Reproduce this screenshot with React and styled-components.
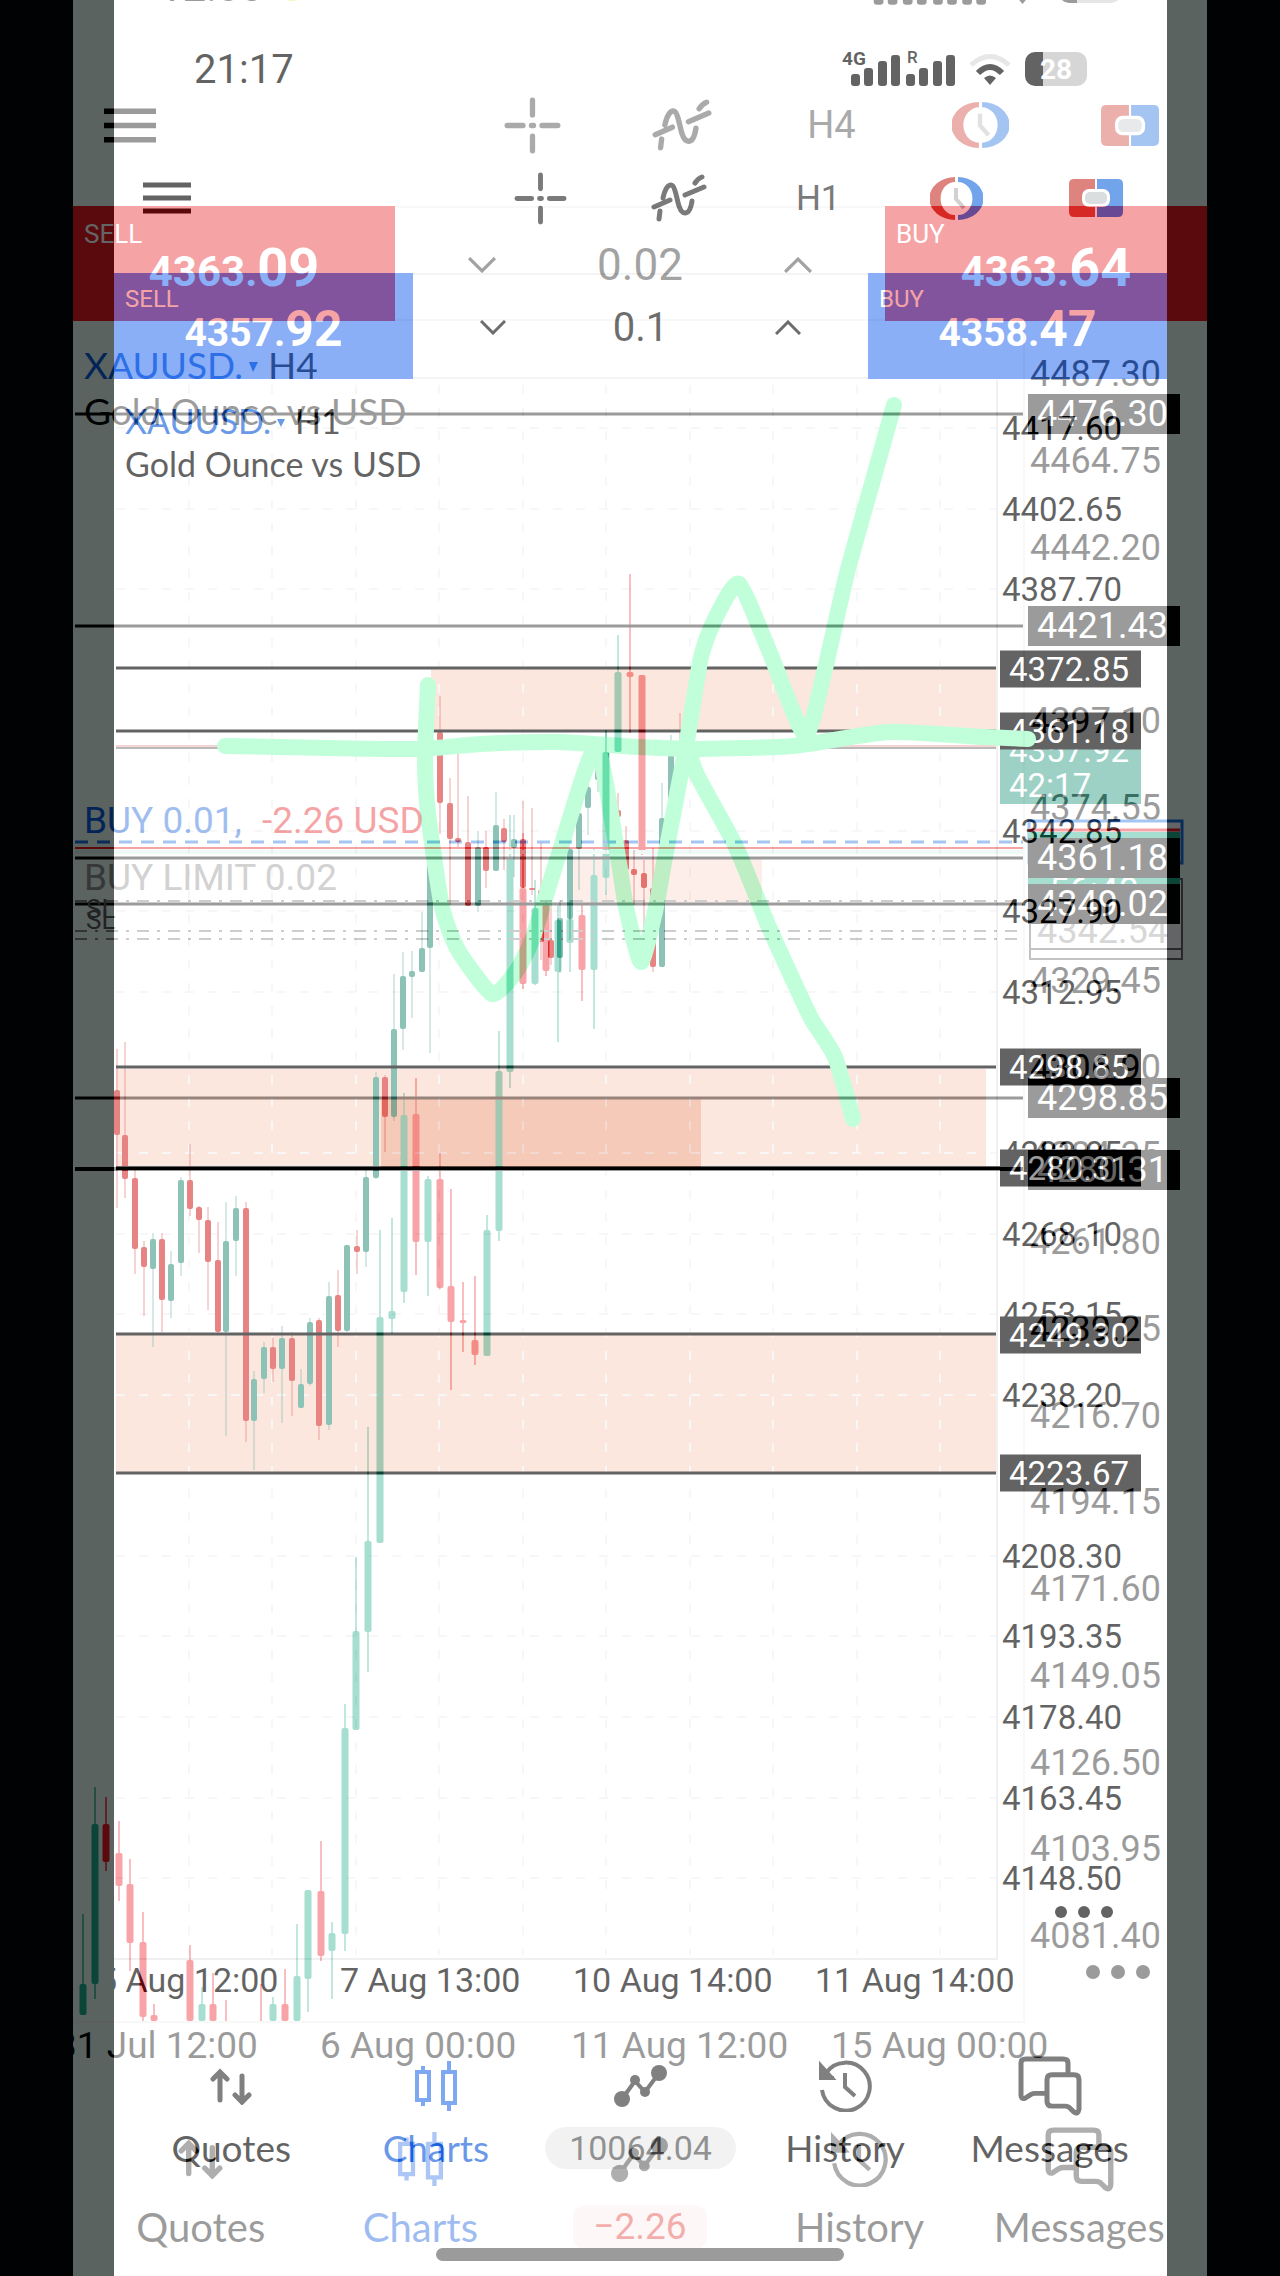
import React from 'react'
import styled, { createGlobalStyle, ThemeProvider } from 'styled-components'

const GlobalStyle = createGlobalStyle`
* { box-sizing: border-box; }
body {
margin: 0;
background-color: #000203;
font-family: Roboto, "Liberation Sans", sans-serif;
}
`

// the two chart screens, one fading into the other
const outgoing = {
  bar: 123, barTop: 0, barPad: 15, sidePad: 80, time: 40,
  tool: 150, toolPad: 29, toolText: 35, k: 1,
  trade: 106, tradeColor: "#427df2", tradePad: 13, side: 24, sideLine: 26,
  price: 39, big: 50, priceLine: 34, volume: 40,
  tabsTop: 22, tabsPad: 15, iconBox: 70, labelTop: 6, label: 42, tabText: 37, pillPad: 24,
  pill: "#ebebeb", pillText: "#4c4c4c", pillRadius: 21, pillFont: 34,
}

const incoming = {
  bar: 132, barTop: -88, barPad: 16, sidePad: 86, time: 42,
  tool: 162, toolPad: 31, toolText: 38, k: 1.08,
  trade: 115, tradeColor: "#e8161c", tradePad: 14, side: 26, sideLine: 28,
  price: 42, big: 54, priceLine: 40, volume: 44,
  tabsTop: 53, tabsPad: 18, iconBox: 74, labelTop: 9, label: 44, tabText: 40, pillPad: 20,
  pill: "#fdedeb", pillText: "#e0302a", pillRadius: 12, pillFont: 37,
}

const Stage = styled.main`
display: grid;
background-color: #000203;
overflow: hidden;
`

const Screen = styled.section`
grid-area: 1 / 1;
min-width: 0;
overflow: hidden;
background-color: #fff;
color: #000;
`

const BackScreen = styled(Screen)`
margin: 0 113px 0 114px;
`

const FrontScreen = styled(Screen)`
margin: 0 73px;
opacity: 0.39;
background: linear-gradient(90deg, #e9fbf5 41px, #fff 41px, #fff calc(100% - 40px), #e9fbf5 calc(100% - 40px));
`

const StatusBar = styled.header`
display: flex;
align-items: center;
gap: 14px;
height: ${({ theme }) => theme.bar}px;
margin-top: ${({ theme }) => theme.barTop}px;
padding: ${({ theme }) => `${theme.barPad}px ${theme.sidePad}px 0 ${theme.sidePad}px`};
`

const Time = styled.time`
font-size: ${({ theme }) => theme.time}px;
`

const Spacer = styled.div`
flex: 1;
`

const Dot = styled.span`
width: 29px;
height: 29px;
border-radius: 50%;
background-color: #e2f23c;
`

const Battery = styled.div`
width: 62px;
height: 34px;
border-radius: 10px;
line-height: 35px;
text-align: center;
color: #fff;
font-size: 28px;
font-weight: 700;
background: linear-gradient(90deg, #000 18px, #bdbdbd 18px);
`

const Toolbar = styled.div`
display: grid;
grid-template-columns: 1fr repeat(5, 13.2%);
align-items: center;
height: ${({ theme }) => theme.tool}px;
padding-right: 2px;
`

const ToolButton = styled.button`
display: flex;
align-items: center;
justify-content: ${({ $menu }) => ($menu ? "flex-start" : "center")};
padding: 0 0 0 ${({ $menu, theme }) => ($menu ? theme.toolPad : 0)}px;
border: none;
background: none;
color: #262626;
font-family: inherit;
font-size: ${({ theme }) => theme.toolText}px;
cursor: pointer;
`

const Icon = styled.svg.attrs({ preserveAspectRatio: "none", fill: "none", stroke: "currentColor" })`
display: block;
flex: none;
width: ${({ $w, theme }) => Math.round($w * theme.k)}px;
height: ${({ $h, theme }) => Math.round($h * theme.k)}px;
`

const TradePanel = styled.div`
display: grid;
grid-template-columns: 28.4% 1fr 28.4%;
height: ${({ theme }) => theme.trade}px;
`

const TradeButton = styled.button`
display: flex;
flex-direction: column;
padding: ${({ theme }) => theme.tradePad}px 11px 0;
border: none;
color: #fff;
background-color: ${({ theme }) => theme.tradeColor};
font-family: inherit;
text-align: left;
cursor: pointer;
`

const Side = styled.span`
font-size: ${({ theme }) => theme.side}px;
line-height: ${({ theme }) => theme.sideLine}px;
`

const Price = styled.span`
align-self: center;
white-space: nowrap;
font-weight: 700;
font-size: ${({ theme }) => theme.price}px;
line-height: ${({ theme }) => theme.priceLine}px;
`

const Big = styled.span`
font-size: ${({ theme }) => theme.big}px;
`

const Volume = styled.div`
display: flex;
align-items: center;
justify-content: space-between;
padding: 2px 14.8% 0;
border-top: 2px solid #eee;
border-bottom: 2px solid #eee;
`

const StepButton = styled.button`
padding: 0;
border: none;
background: none;
color: #111;
cursor: pointer;
`

const VolumeInput = styled.input`
width: 120px;
padding: 0;
border: none;
background: none;
text-align: center;
color: #111;
font-family: inherit;
font-size: ${({ theme }) => theme.volume}px;
`

const Chart = styled.svg`
display: block;
width: 100%;
height: auto;
font-family: Roboto, "Liberation Sans", sans-serif;
`

const Tabs = styled.nav`
display: grid;
grid-template-columns: repeat(5, 1fr);
padding: ${({ theme }) => `${theme.tabsTop}px ${theme.tabsPad}px 0`};
`

const Tab = styled.a`
display: flex;
flex-direction: column;
align-items: center;
min-width: 0;
color: ${({ $active }) => ($active ? "#0a56dc" : "#000")};
text-decoration: none;
`

const IconBox = styled.span`
display: grid;
place-items: center;
height: ${({ theme }) => theme.iconBox}px;
color: ${({ $active }) => ($active ? "#2c72ea" : "#303030")};
`

const Label = styled.span`
margin-top: ${({ theme }) => theme.labelTop}px;
font-family: Lato, sans-serif;
font-size: ${({ theme }) => theme.tabText}px;
line-height: ${({ theme }) => theme.label}px;
`

const Pill = styled(Label)`
padding: 0 ${({ theme }) => theme.pillPad}px;
border-radius: ${({ theme }) => theme.pillRadius}px;
color: ${({ theme }) => theme.pillText};
background-color: ${({ theme }) => theme.pill};
font-family: Roboto, sans-serif;
font-size: ${({ theme }) => theme.pillFont}px;
`

const HomeBar = styled.div`
position: relative;
width: 36%;
height: 13px;
margin: -1px auto 15px;
border-radius: 7px;
background-color: #000;
`

/* ---------- icons ---------- */

const Signal = () => (
  <Icon $w={113} $h={38} viewBox="0 0 113 38">
    {[[9, 12], [22, 18], [36, 25], [49, 31], [64, 12], [77, 18], [91, 25], [104, 31]].map(([x, h]) => (
      <rect key={x} x={x} y={36 - h} width="9" height={h} rx="3" fill="#000" stroke="none" />
    ))}
    <text x="0" y="15" fontSize="19" fontWeight="700" fill="#000" stroke="none">4G</text>
    <text x="65" y="13" fontSize="17" fontWeight="500" fill="#000" stroke="none">R</text>
  </Icon>
)

const Wifi = () => (
  <Icon $w={42} $h={32} viewBox="0 0 42 32">
    <path d="M2 12Q21 -5 40 12" stroke="#d9d9d9" strokeWidth="5" />
    <path d="M9 20Q21 8 33 20" stroke="#000" strokeWidth="6" />
    <path d="M15 25Q21 20 27 25L21 32Z" fill="#000" stroke="none" />
  </Icon>
)

const MenuIcon = () => (
  <Icon $w={48} $h={32} viewBox="0 0 48 32">
    <path d="M0 3H48M0 16H48M0 29H48" stroke="#000" strokeWidth="5" />
  </Icon>
)

const CrossIcon = () => (
  <Icon $w={53} $h={53} viewBox="0 0 54 54" strokeWidth="5" strokeLinecap="round">
    <path d="M3 27H18M36 27H51M27 3V17M27 37V51M26 27H28" />
  </Icon>
)

const IndicatorIcon = () => (
  <Icon $w={56} $h={48} viewBox="0 0 56 48" strokeWidth="5" strokeLinecap="round">
    <path d="M3 33L19 26M34 21L53 13M8 45L9 37M12 24C14 15 17 11 20 11C24 11 26 26 28 32C30 38 32 39 34 39C38 39 40 34 41 27M44 9C46 6 48 4 51 3" />
  </Icon>
)

const ClockIcon = () => (
  <Icon $w={53} $h={43} viewBox="0 0 53 43">
    <path d="M25 0A25 21 0 0 0 25 43V38A14 16 0 0 1 25 5Z" fill="#cc342c" stroke="none" />
    <path d="M28 0A25 21 0 0 1 28 43V38A14 16 0 0 0 28 5Z" fill="#186ae0" stroke="none" />
    <path d="M26 11V22L34 31" stroke="#b4b4b8" strokeWidth="4" />
  </Icon>
)

const OrderIcon = () => (
  <Icon $w={54} $h={38} viewBox="0 0 54 38" stroke="none">
    <path d="M5 0H26V38H5Q0 38 0 33V5Q0 0 5 0Z" fill="#cc342c" stroke="none" />
    <path d="M28 0H49Q54 0 54 5V33Q54 38 49 38H28Z" fill="#186ae0" stroke="none" />
    <rect x="13" y="10" width="28" height="18" rx="7" fill="#fff" stroke="none" />
    <rect x="16" y="13" width="22" height="12" rx="5" fill="#c4c9cc" stroke="none" />
  </Icon>
)

const Chevron = ({ up }) => (
  <Icon $w={26} $h={15} viewBox="0 0 26 15" strokeWidth="3">
    <path d={up ? "M1 14L13 2L25 14" : "M1 1L13 13L25 1"} />
  </Icon>
)

const QuotesIcon = () => (
  <Icon $w={42} $h={37} viewBox="0 0 42 37" strokeWidth="5" strokeLinecap="round">
    <path d="M10 32V4M3 11L10 4L17 11M32 8V34M25 27L32 34L39 27" />
  </Icon>
)

const ChartsIcon = () => (
  <Icon $w={42} $h={50} viewBox="0 0 42 50" strokeWidth="4">
    <path d="M2 11H14V39H2ZM8 5V11M8 39V45M28 11H40V42H28ZM34 0V11M34 42V50" />
  </Icon>
)

const TradeIcon = () => (
  <Icon $w={53} $h={42} viewBox="0 0 53 42" strokeWidth="4">
    <path d="M8 34L21 16L31 27L45 8" />
    <g fill="currentColor" stroke="none">
      <circle cx="8" cy="34" r="8" />
      <circle cx="21" cy="15" r="5" />
      <circle cx="31" cy="27" r="5" />
      <circle cx="45" cy="8" r="8" />
    </g>
  </Icon>
)

const HistoryIcon = () => (
  <Icon $w={53} $h={52} viewBox="0 0 53 52" strokeWidth="4">
    <path d="M3 30A24 24 0 1 0 7 13M2 5V18H15M26 13V27L36 36" />
    <path d="M2 6V18H13Z" fill="currentColor" />
  </Icon>
)

const MessagesIcon = () => (
  <Icon $w={64} $h={60} viewBox="0 0 64 61" strokeWidth="5">
    <path d="M50 18V7Q50 3 45 3H8Q3 3 3 7V40Q3 44 7 43L13 39Q15 38 17 38H27" />
    <path d="M34 19H56Q61 19 61 24V54Q60 60 56 57L51 52Q49 51 47 51H34Q29 51 29 46V24Q29 19 34 19Z" />
  </Icon>
)

/* ---------- chart data ---------- */
// candle: x, high, body top, body bottom, low, 1 when bullish

const candlesH1 = [
  [117, 1049, 1090, 1135, 1208, 0], [125, 1042, 1135, 1179, 1198, 0], [135, 1170, 1178, 1249, 1274, 0],
  [144, 1241, 1247, 1267, 1316, 0], [153, 1233, 1239, 1269, 1347, 1], [162, 1233, 1239, 1300, 1332, 0],
  [171, 1251, 1264, 1301, 1318, 1], [181, 1177, 1180, 1263, 1276, 1], [190, 1144, 1180, 1209, 1216, 0],
  [199, 1206, 1207, 1220, 1253, 0], [208, 1207, 1220, 1262, 1310, 0], [218, 1222, 1260, 1332, 1333, 0],
  [226, 1202, 1241, 1332, 1436, 1], [236, 1196, 1208, 1241, 1276, 1], [246, 1202, 1208, 1421, 1442, 0],
  [254, 1371, 1379, 1421, 1470, 1], [264, 1342, 1347, 1379, 1393, 1], [273, 1338, 1347, 1369, 1382, 0],
  [282, 1326, 1338, 1369, 1423, 1], [292, 1332, 1338, 1381, 1416, 0], [301, 1369, 1384, 1408, 1408, 1],
  [310, 1318, 1322, 1384, 1386, 1], [319, 1318, 1320, 1426, 1440, 0], [329, 1282, 1296, 1425, 1430, 1],
  [338, 1270, 1295, 1331, 1347, 0], [347, 1245, 1245, 1331, 1332, 1], [357, 1230, 1246, 1252, 1274, 0],
  [366, 1170, 1177, 1252, 1267, 1], [376, 1072, 1077, 1178, 1179, 1], [385, 1075, 1077, 1117, 1152, 0],
  [394, 974, 1029, 1117, 1121, 1], [403, 952, 976, 1029, 1050, 1], [412, 951, 971, 977, 1018, 1],
  [422, 912, 948, 972, 972, 1], [430, 850, 857, 948, 1053, 1], [440, 696, 732, 803, 834, 0],
  [450, 778, 803, 839, 905, 0], [458, 753, 838, 842, 847, 0], [468, 796, 842, 906, 906, 0],
  [478, 831, 847, 906, 912, 1], [486, 831, 847, 871, 888, 0], [496, 792, 825, 871, 871, 1],
  [504, 819, 828, 842, 870, 0], [514, 815, 839, 848, 877, 1], [523, 801, 839, 888, 888, 0],
  [532, 808, 888, 890, 895, 0], [541, 843, 890, 942, 960, 0], [551, 900, 940, 958, 965, 0],
  [560, 900, 918, 958, 973, 1], [570, 848, 849, 919, 940, 1], [579, 807, 813, 849, 890, 1],
  [588, 773, 787, 808, 835, 1], [598, 747, 765, 780, 792, 1], [606, 730, 748, 766, 770, 1],
  [618, 793, 810, 817, 825, 0], [626, 826, 840, 870, 872, 0], [634, 850, 869, 875, 905, 0],
  [644, 860, 873, 888, 932, 0], [653, 848, 888, 967, 972, 0], [662, 783, 818, 967, 967, 1],
  [671, 735, 755, 818, 820, 1], [680, 713, 747, 755, 760, 0],
]

const candlesH4 = [
  [83, 1914, 1984, 2015, 2015, 1], [95, 1787, 1824, 1984, 1999, 1], [106, 1797, 1824, 1862, 1871, 0],
  [119, 1821, 1853, 1886, 1901, 0], [130, 1859, 1884, 1943, 1971, 0], [143, 1912, 1942, 2017, 2021, 0],
  [154, 2004, 2015, 2021, 2021, 0], [190, 1945, 1960, 2021, 2021, 0], [202, 1987, 2004, 2021, 2021, 1],
  [213, 1973, 2004, 2021, 2021, 0], [226, 2000, 2021, 2021, 2021, 0], [261, 1984, 2021, 2021, 2021, 0],
  [273, 1997, 2004, 2021, 2021, 1], [285, 1969, 2004, 2021, 2021, 0], [297, 1924, 1976, 2021, 2021, 1],
  [308, 1890, 1890, 1979, 2012, 1], [321, 1841, 1891, 1956, 1961, 0], [332, 1922, 1933, 1951, 1999, 1],
  [345, 1704, 1728, 1934, 1951, 1], [356, 1557, 1631, 1730, 1730, 1], [368, 1427, 1541, 1632, 1672, 1],
  [380, 1230, 1317, 1543, 1543, 1], [392, 1218, 1311, 1319, 1333, 1], [404, 1093, 1115, 1292, 1303, 1],
  [416, 1078, 1114, 1242, 1275, 0], [428, 1176, 1179, 1242, 1296, 1], [440, 1153, 1179, 1288, 1289, 0],
  [451, 1189, 1286, 1322, 1390, 0], [463, 1282, 1320, 1323, 1352, 0], [475, 1276, 1340, 1355, 1365, 0],
  [487, 1215, 1230, 1356, 1356, 1], [499, 1031, 1071, 1231, 1241, 1], [510, 815, 858, 1072, 1088, 1],
  [523, 833, 888, 984, 989, 0], [535, 880, 908, 984, 985, 1], [546, 900, 904, 971, 976, 0],
  [558, 905, 920, 972, 1042, 1], [570, 900, 919, 943, 972, 1], [582, 905, 915, 970, 1001, 0],
  [594, 847, 875, 970, 1029, 1], [606, 730, 752, 878, 895, 1], [618, 635, 672, 752, 752, 1],
  [630, 574, 672, 677, 733, 0], [642, 675, 675, 852, 855, 0],
]

const pricesH1 = [
  [428, "4417.60"], [509, "4402.65"], [589, "4387.70"], [831, "4342.85"], [911, "4327.90"],
  [992, "4312.95"], [1153, "4283.05"], [1234, "4268.10"], [1314, "4253.15"], [1395, "4238.20"],
  [1556, "4208.30"], [1636, "4193.35"], [1717, "4178.40"], [1798, "4163.45"], [1878, "4148.50"],
]

const pricesH4 = [
  [373, "4487.30"], [460, "4464.75"], [547, "4442.20"], [720, "4397.10"], [807, "4374.55"],
  [980, "4329.45"], [1067, "4306.90"], [1154, "4284.35"], [1241, "4261.80"], [1328, "4239.25"],
  [1415, "4216.70"], [1501, "4194.15"], [1588, "4171.60"], [1675, "4149.05"], [1762, "4126.50"],
  [1848, "4103.95"], [1935, "4081.40"],
]

const gridX = [189, 272, 356, 439, 523, 606, 690, 773, 857, 940]

const levelLine = [
  [225, 746], [328, 748], [420, 749], [481, 744], [557, 742], [640, 747],
  [701, 749], [793, 746], [889, 732], [984, 737], [1028, 739],
]
const swingLine = [
  [428, 685], [425, 757], [428, 813], [442, 907], [458, 950], [492, 994], [515, 973], [532, 940],
  [558, 857], [596, 747], [618, 857], [626, 907], [641, 962], [656, 907], [665, 857], [686, 747],
  [701, 657], [716, 617], [739, 584], [770, 653], [805, 735], [824, 673], [847, 573], [873, 480],
  [894, 405],
]
const dropLine = [
  [688, 747], [697, 775], [736, 847], [768, 925], [799, 993], [812, 1020], [835, 1057], [853, 1119],
]

// rounds the hand drawn points into one curve
const smooth = (pts) =>
  pts.reduce((d, [x, y], i) => {
    if (i === 0) return `M${x} ${y}`
    const [ax, ay] = pts[i - 2] || pts[i - 1]
    const [bx, by] = pts[i - 1]
    const [cx, cy] = pts[i + 1] || pts[i]
    return `${d}C${bx + (x - ax) / 10} ${by + (y - ay) / 10} ${x - (cx - bx) / 10} ${y - (cy - by) / 10} ${x} ${y}`
  }, "")

const Candles = ({ data, width, up, down, wick }) =>
  data.map(([x, high, top, bottom, low, bull]) => (
    <g key={x} fill={bull ? up : down} stroke={bull ? up : down}>
      <line x1={x} x2={x} y1={high} y2={low} strokeWidth={wick} strokeOpacity="0.7" />
      {bottom > top && (
        <rect x={x - width / 2} y={top} width={width} height={bottom - top} rx="2" stroke="none" />
      )}
    </g>
  ))

const Tag = ({ x, y, width, height, size, fill = "#000", children }) => (
  <g>
    <rect x={x} y={y - height / 2} width={width} height={height} fill={fill} />
    <text x={x + 9} y={y + 12} fontSize={size} fill="#fff">{children}</text>
  </g>
)

const ChartH1 = () => (
  <Chart viewBox="114 379 1053 1650" role="img" aria-label="XAUUSD H1 chart">
    <g fill="#f9d8c9">
      <rect x="431" y="669" width="566" height="61" />
      <rect x="116" y="1069" width="870" height="98" />
      <rect x="116" y="1335" width="881" height="137" />
    </g>
    <g stroke="#f2f2f2" strokeWidth="2" strokeDasharray="9 14">
      {gridX.map((x) => <line key={x} x1={x} x2={x} y1="385" y2="1955" />)}
      {pricesH1.map(([y]) => <line key={y} x1="116" x2="996" y1={y} y2={y} />)}
    </g>
    <path d="M997 380V1959H114" stroke="#e8e8e8" strokeWidth="2" fill="none" />
    <Candles data={candlesH1} width={6} up="#459b89" down="#d83533" wick={1} />
    <g stroke="#000" strokeWidth="3">
      {[668, 731, 1067, 1334, 1473].map((y) => <line key={y} x1="116" x2="996" y1={y} y2={y} />)}
      <line x1="116" x2="1000" y1="1168" y2="1168" strokeWidth="4" />
    </g>
    <line x1="116" x2="996" y1="746" y2="746" stroke="#f0b9b9" strokeWidth="2" />
    <line x1="116" x2="996" y1="748" y2="748" stroke="#8f8f8f" strokeWidth="2" />
    <g fontSize="33">
      {pricesH1.map(([y, text]) => <text key={y} x="1002" y={y + 12} fill="#000">{text}</text>)}
      <rect x="1000" y="740" width="141" height="64" fill="#5fb5a2" />
      <text x="1009" y="762" fill="#fff">4357.92</text>
      <text x="1009" y="797" fill="#fff">42:17</text>
      {[[669, "4372.85"], [731, "4361.18"], [1067, "4298.85"], [1168, "4280.31"], [1335, "4249.30"], [1473, "4223.67"]].map(([y, text]) => (
        <Tag key={y} x={1000} y={y} width={141} height={37} size={33}>{text}</Tag>
      ))}
    </g>
    <g fontSize="34">
      <text x="98" y="1992">5 Aug 12:00</text>
      <text x="340" y="1992">7 Aug 13:00</text>
      <text x="573" y="1992">10 Aug 14:00</text>
      <text x="815" y="1992">11 Aug 14:00</text>
    </g>
    <circle cx="1061" cy="1912" r="6" />
    <circle cx="1084" cy="1912" r="6" />
    <circle cx="1107" cy="1912" r="6" />
    <g fontFamily="Lato, sans-serif" fontSize="34">
      <text x="125" y="434" fill="#0a5ad8">XAUUSD.</text>
      <path d="M277 419H285L281 427Z" fill="#0a5ad8" />
      <text x="295" y="434">H1</text>
      <text x="125" y="477">Gold Ounce vs USD</text>
    </g>
    <g fill="none" stroke="#98ffc2" strokeWidth="16" strokeLinecap="round" strokeLinejoin="round">
      <path d={smooth(levelLine)} />
      <path d={smooth(swingLine)} />
      <path d={smooth(dropLine)} />
    </g>
  </Chart>
)

const ChartH4 = () => (
  <Chart viewBox="73 321 1134 1748" role="img" aria-label="XAUUSD H4 chart">
    <rect x="381" y="1099" width="320" height="69" fill="#f2b5a1" />
    <rect x="573" y="859" width="189" height="44" fill="#fbd4c8" />
    <path d="M1024 322V2022H73" stroke="#efefef" strokeWidth="2" fill="none" />
    <Candles data={candlesH4} width={7} up="#1dae89" down="#ed1620" wick={2} />
    <line x1="75" x2="1023" y1="842" y2="842" stroke="#1c6fe0" strokeWidth="3" strokeDasharray="13 9" />
    <line x1="75" x2="1023" y1="848" y2="848" stroke="#e8161c" strokeWidth="2" />
    <line x1="75" x2="1023" y1="852" y2="852" stroke="#d8f0ea" strokeWidth="4" />
    <g stroke="#808080" strokeWidth="2" strokeDasharray="12 8 3 8">
      <line x1="75" x2="1023" y1="901" y2="901" />
      <line x1="75" x2="1023" y1="931" y2="931" />
      <line x1="75" x2="1023" y1="939" y2="939" />
    </g>
    <g stroke="#000" strokeWidth="3">
      {[414, 626, 858, 904, 1098].map((y) => <line key={y} x1="75" x2="1023" y1={y} y2={y} />)}
      <line x1="75" x2="1023" y1="1169" y2="1169" strokeWidth="4" />
    </g>
    <g fontSize="36">
      {pricesH4.map(([y, text]) => <text key={y} x="1030" y={y + 13}>{text}</text>)}
      <rect x="1030" y="879" width="152" height="80" fill="#fff" stroke="#666" strokeWidth="2" />
      <line x1="1030" x2="1182" y1="949" y2="949" stroke="#666" strokeWidth="2" />
      <text x="1037" y="943" fill="#999">4342.54</text>
      <rect x="1029" y="821" width="153" height="42" fill="#fff" stroke="#1c6fe0" strokeWidth="3" />
      <rect x="1028" y="832" width="152" height="60" fill="#1dae89" />
      <line x1="1028" x2="1180" y1="830" y2="830" stroke="#e8161c" strokeWidth="3" />
      <text x="1049" y="903" fill="#fff">56:40</text>
      {[[414, "4476.30"], [626, "4421.43"], [858, "4361.18"], [904, "4349.02"], [1098, "4298.85"], [1170, "4280.31"]].map(([y, text]) => (
        <Tag key={y} x={1028} y={y} width={152} height={40} size={36}>{text}</Tag>
      ))}
    </g>
    <g fontSize="37">
      <text x="56" y="2058">31 Jul 12:00</text>
      <text x="320" y="2058">6 Aug 00:00</text>
      <text x="571" y="2058">11 Aug 12:00</text>
      <text x="831" y="2058">15 Aug 00:00</text>
      <text x="84" y="833" fill="#0a5ad8">BUY 0.01,</text>
      <text x="262" y="833" fill="#e8161c">-2.26 USD</text>
      <text x="84" y="890" fill="#8c8c8c">BUY LIMIT 0.02</text>
      <text x="86" y="918" fontSize="26" fill="#555">SL</text>
      <text x="86" y="929" fontSize="26" fill="#555">SL</text>
    </g>
    <circle cx="1093" cy="1972" r="7" />
    <circle cx="1118" cy="1972" r="7" />
    <circle cx="1143" cy="1972" r="7" />
    <g fontFamily="Lato, sans-serif" fontSize="37">
      <text x="84" y="379" fill="#0a5ad8">XAUUSD.</text>
      <path d="M249 362H258L253 372Z" fill="#0a5ad8" />
      <text x="268" y="379">H4</text>
      <text x="84" y="425">Gold Ounce vs USD</text>
    </g>
  </Chart>
)

const Status = ({ time, dot }) => (
  <StatusBar>
    <Time>{time}</Time>
    {dot && <Dot />}
    <Spacer />
    <Signal />
    <Wifi />
    <Battery>28</Battery>
  </StatusBar>
)

const Tools = ({ period }) => (
  <Toolbar>
    <ToolButton $menu aria-label="Menu"><MenuIcon /></ToolButton>
    <ToolButton aria-label="Crosshair"><CrossIcon /></ToolButton>
    <ToolButton aria-label="Indicators"><IndicatorIcon /></ToolButton>
    <ToolButton>{period}</ToolButton>
    <ToolButton aria-label="Trade levels"><ClockIcon /></ToolButton>
    <ToolButton aria-label="New order"><OrderIcon /></ToolButton>
  </Toolbar>
)

const Trade = ({ sell, buy, volume }) => (
  <TradePanel>
    <TradeButton>
      <Side>SELL</Side>
      <Price>{sell[0]}<Big>{sell[1]}</Big></Price>
    </TradeButton>
    <Volume>
      <StepButton aria-label="Less"><Chevron /></StepButton>
      <VolumeInput aria-label="Volume" defaultValue={volume} />
      <StepButton aria-label="More"><Chevron up /></StepButton>
    </Volume>
    <TradeButton>
      <Side>BUY</Side>
      <Price>{buy[0]}<Big>{buy[1]}</Big></Price>
    </TradeButton>
  </TradePanel>
)

const BottomTabs = ({ balance }) => (
  <Tabs>
    <Tab href="#quotes"><IconBox><QuotesIcon /></IconBox><Label>Quotes</Label></Tab>
    <Tab href="#charts" $active><IconBox $active><ChartsIcon /></IconBox><Label>Charts</Label></Tab>
    <Tab href="#trade"><IconBox><TradeIcon /></IconBox><Pill>{balance}</Pill></Tab>
    <Tab href="#history"><IconBox><HistoryIcon /></IconBox><Label>History</Label></Tab>
    <Tab href="#messages"><IconBox><MessagesIcon /></IconBox><Label>Messages</Label></Tab>
  </Tabs>
)

const App = () => {
  return (
    <Stage>
      <GlobalStyle />
      <ThemeProvider theme={outgoing}>
        <BackScreen>
          <Status time="21:17" />
          <Tools period="H1" />
          <Trade sell={["4357.", "92"]} buy={["4358.", "47"]} volume="0.1" />
          <ChartH1 />
          <BottomTabs balance="10064.04" />
        </BackScreen>
      </ThemeProvider>
      <ThemeProvider theme={incoming}>
        <FrontScreen>
          <Status time="12:08" dot />
          <Tools period="H4" />
          <Trade sell={["4363.", "09"]} buy={["4363.", "64"]} volume="0.02" />
          <ChartH4 />
          <BottomTabs balance="−2.26" />
          <HomeBar />
        </FrontScreen>
      </ThemeProvider>
    </Stage>
  )
}

export default App
